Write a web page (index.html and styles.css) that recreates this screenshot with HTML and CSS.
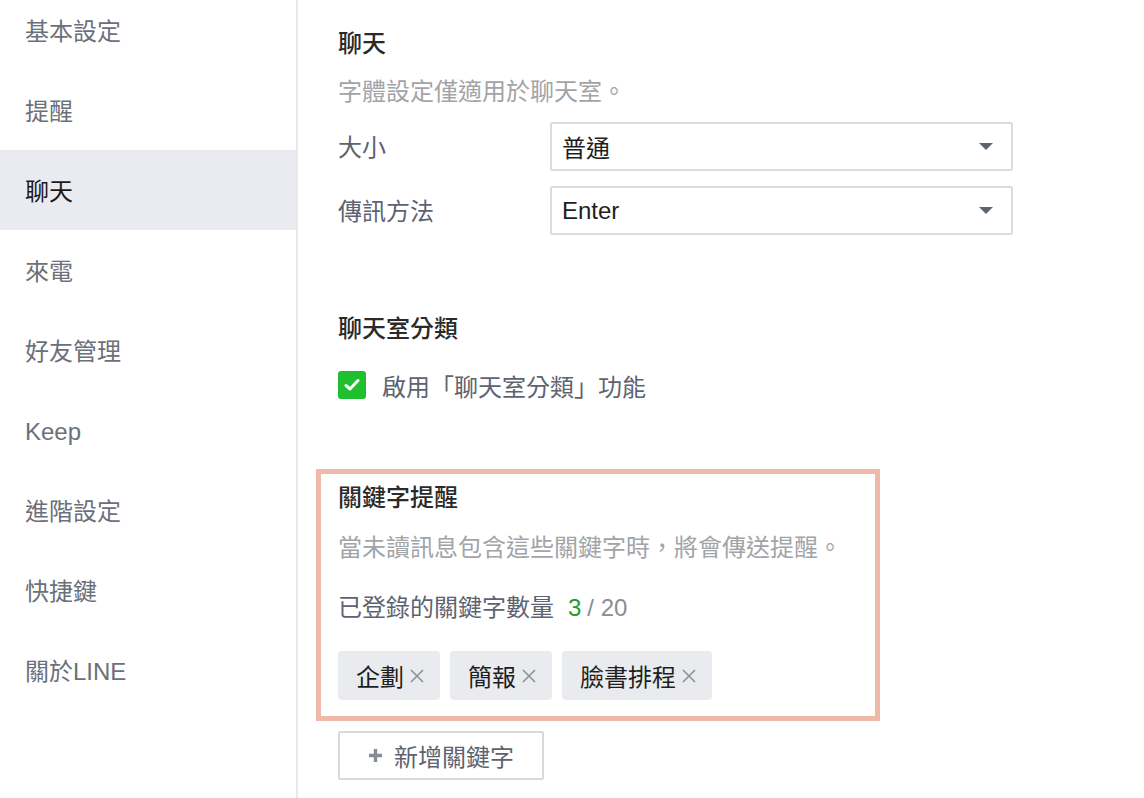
FILE: index.html
```html
<!DOCTYPE html>
<html lang="zh-Hant">
<head>
<meta charset="utf-8">
<title>設定</title>
<link rel="stylesheet" href="styles.css">
</head>
<body>
<div class="app">
  <nav class="sidebar">
    <ul class="menu">
      <li class="menu-item">基本設定</li>
      <li class="menu-item">提醒</li>
      <li class="menu-item active">聊天</li>
      <li class="menu-item">來電</li>
      <li class="menu-item">好友管理</li>
      <li class="menu-item">Keep</li>
      <li class="menu-item">進階設定</li>
      <li class="menu-item">快捷鍵</li>
      <li class="menu-item">關於LINE</li>
    </ul>
  </nav>
  <main class="content">
    <section class="section chat">
      <h2 class="title">聊天</h2>
      <p class="desc">字體設定僅適用於聊天室。</p>
      <div class="field">
        <span class="label">大小</span>
        <div class="select"><span class="select-value">普通</span><span class="arrow"></span></div>
      </div>
      <div class="field">
        <span class="label">傳訊方法</span>
        <div class="select"><span class="select-value">Enter</span><span class="arrow"></span></div>
      </div>
    </section>
    <section class="section folders">
      <h2 class="title">聊天室分類</h2>
      <label class="check-row">
        <span class="checkbox">
          <svg width="16" height="14" viewBox="0 0 16 14"><path d="M2 7.5 L6 11 L14 2.5" fill="none" stroke="#fff" stroke-width="3" stroke-linecap="round" stroke-linejoin="round"/></svg>
        </span>
        <span class="check-label">啟用「聊天室分類」功能</span>
      </label>
    </section>
    <section class="keyword-box">
      <h2 class="title">關鍵字提醒</h2>
      <p class="desc kw-desc">當未讀訊息包含這些關鍵字時，將會傳送提醒。</p>
      <p class="count">已登錄的關鍵字數量<span class="num">3</span><span class="total">/ 20</span></p>
      <div class="tags">
        <span class="tag">企劃<svg class="x" width="14" height="14" viewBox="0 0 14 14"><path d="M1 1 L13 13 M13 1 L1 13" stroke="#8b9099" stroke-width="1.6"/></svg></span>
        <span class="tag">簡報<svg class="x" width="14" height="14" viewBox="0 0 14 14"><path d="M1 1 L13 13 M13 1 L1 13" stroke="#8b9099" stroke-width="1.6"/></svg></span>
        <span class="tag">臉書排程<svg class="x" width="14" height="14" viewBox="0 0 14 14"><path d="M1 1 L13 13 M13 1 L1 13" stroke="#8b9099" stroke-width="1.6"/></svg></span>
      </div>
    </section>
    <button class="add-btn"><svg width="15" height="15" viewBox="0 0 15 15"><path d="M7.5 1 V14 M1 7.5 H14" stroke="#868b94" stroke-width="3.4"/></svg><span>新增關鍵字</span></button>
  </main>
</div>
</body>
</html>
```
FILE: styles.css
```css
* { box-sizing: border-box; }
html, body { margin: 0; padding: 0; background: #fff; }
body {
  font-family: "Liberation Sans", "Noto Sans CJK TC", sans-serif;
  font-size: 24px;
  color: #1e1e1e;
  width: 1144px;
  height: 798px;
  overflow: hidden;
}
.app { display: flex; height: 798px; }
.sidebar {
  width: 298px;
  flex: none;
  border-right: 2px solid #e8e8ea;
  overflow: hidden;
}
.menu { list-style: none; margin: -10px 0 0; padding: 0; }
.menu-item {
  height: 80px;
  display: flex;
  align-items: center;
  padding: 4px 0 0 25px;
  color: #6b7079;
  line-height: 32px;
}
.menu-item.active { background: #e9ebf1; color: #1a1a1a; }

.content { flex: 1; padding: 28px 0 0 40px; }
.title { margin: 0; font-size: 24px; font-weight: 500; line-height: 32px; color: #2a2a2a; }
.desc { margin: 16px 0 0; line-height: 32px; color: #a2a4a8; }
.field { display: flex; align-items: center; height: 49px; margin-top: 14px; }
.field + .field { margin-top: 15px; }
.label { width: 212px; color: #5d6370; line-height: 32px; padding-top: 3px; }
.select {
  width: 463px;
  height: 49px;
  border: 2px solid #dcdcdc;
  border-radius: 2px;
  display: flex;
  align-items: center;
  justify-content: space-between;
  padding: 0 18px 0 10px;
  color: #1e1e1e;
}
.arrow {
  width: 0; height: 0;
  border-left: 7px solid transparent;
  border-right: 7px solid transparent;
  border-top: 7px solid #5d6471;
}
.folders { margin-top: 78px; }
.check-row { display: flex; align-items: center; margin-top: 24px; height: 32px; }
.checkbox {
  width: 28px; height: 28px;
  background: #1fbf2e;
  border-radius: 3px;
  display: flex; align-items: center; justify-content: center;
}
.check-label { margin-left: 16px; color: #5d6370; line-height: 32px; padding-top: 5px; }

.keyword-box {
  margin: 68px 0 0 -22px;
  width: 564px;
  border: 5px solid #efb8a8;
  padding: 8px 0 16px 17px;
}
.kw-desc { margin-top: 18px; }
.count { margin: 28px 0 0; line-height: 32px; color: #5d6370; }
.count .num { color: #249a2a; margin-left: 14px; margin-right: 6px; }
.count .total { color: #8a8d93; }
.tags { display: flex; gap: 10px; margin-top: 27px; }
.tag {
  height: 49px;
  background: #e9ebef;
  border-radius: 4px;
  display: flex;
  align-items: center;
  padding: 0 16px 0 18px;
  color: #1e1e1e;
}
.tag .x { margin-left: 6px; }
.add-btn {
  margin-top: 10px;
  width: 206px;
  height: 49px;
  border: 2px solid #dadada;
  border-radius: 2px;
  background: #fff;
  display: flex;
  align-items: center;
  padding: 0 0 0 28px;
  font-family: inherit;
  font-size: 24px;
  color: #5d6370;
}
.add-btn svg { margin-right: 11px; }
```
